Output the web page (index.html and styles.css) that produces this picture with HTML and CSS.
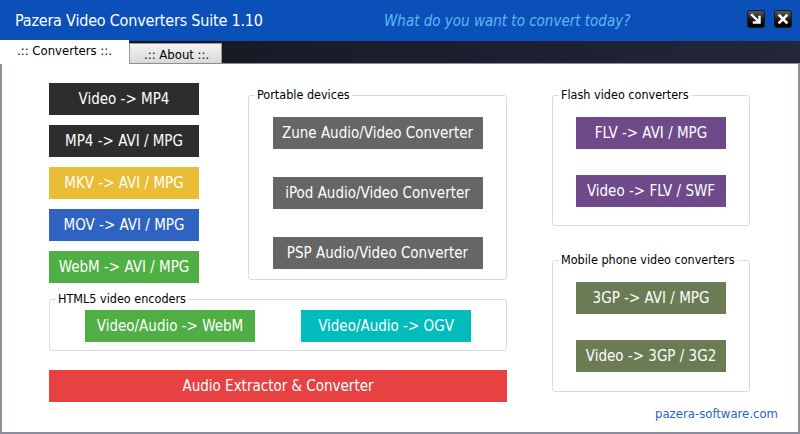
FILE: index.html
```html
<!DOCTYPE html>
<html lang="en">
<head>
  <meta charset="UTF-8">
  <title>Pazera Video Converters Suite 1.10</title>
  <link rel="stylesheet" href="styles.css">
</head>
<body>
  <div class="window">
    <header class="titlebar">
      <span class="title">Pazera Video Converters Suite 1.10</span>
      <span class="tagline">What do you want to convert today?</span>
      <div class="win-buttons">
        <span class="win-btn">
          <svg width="16" height="16" viewBox="0 0 16 16">
            <path d="M4 4 L11 11 M6 11.5 H11.5 V6" stroke="#fff" stroke-width="2.4" fill="none" stroke-linecap="square"/>
          </svg>
        </span>
        <span class="win-btn">
          <svg width="16" height="16" viewBox="0 0 16 16">
            <path d="M4.5 4.5 L11.5 11.5 M11.5 4.5 L4.5 11.5" stroke="#fff" stroke-width="2.6" fill="none" stroke-linecap="square"/>
          </svg>
        </span>
      </div>
    </header>

    <nav class="tabs">
      <span class="tab active">.:: Converters ::.</span>
      <span class="tab">.:: About ::.</span>
    </nav>

    <main class="page">
      <div class="left-col">
        <div class="top-row">
          <div class="stack">
            <a class="btn dark">Video -&gt; MP4</a>
            <a class="btn dark">MP4 -&gt; AVI / MPG</a>
            <a class="btn yellow">MKV -&gt; AVI / MPG</a>
            <a class="btn blue">MOV -&gt; AVI / MPG</a>
            <a class="btn green">WebM -&gt; AVI / MPG</a>
          </div>

          <fieldset class="group portable">
            <legend>Portable devices</legend>
            <div class="group-body">
              <a class="btn gray wide-btn">Zune Audio/Video Converter</a>
              <a class="btn gray wide-btn">iPod Audio/Video Converter</a>
              <a class="btn gray wide-btn">PSP Audio/Video Converter</a>
            </div>
          </fieldset>
        </div>

        <fieldset class="group html5">
          <legend>HTML5 video encoders</legend>
          <div class="group-body row">
            <a class="btn green mid-btn">Video/Audio -&gt; WebM</a>
            <a class="btn cyan mid-btn">Video/Audio -&gt; OGV</a>
          </div>
        </fieldset>

        <a class="btn red audio">Audio Extractor &amp; Converter</a>
      </div>

      <div class="right-col">
        <fieldset class="group flash">
          <legend>Flash video converters</legend>
          <div class="group-body">
            <a class="btn purple">FLV -&gt; AVI / MPG</a>
            <a class="btn purple">Video -&gt; FLV / SWF</a>
          </div>
        </fieldset>

        <fieldset class="group mobile">
          <legend>Mobile phone video converters</legend>
          <div class="group-body">
            <a class="btn olive">3GP -&gt; AVI / MPG</a>
            <a class="btn olive">Video -&gt; 3GP / 3G2</a>
          </div>
        </fieldset>

        <a class="site">pazera-software.com</a>
      </div>
    </main>
  </div>
</body>
</html>
```

FILE: styles.css
```css
body {
  margin: 0;
  font-family: 'DejaVu Sans Condensed', 'DejaVu Sans', sans-serif;
  font-stretch: condensed;
  background-color: #fff;
}
.window {
  width: 800px;
  height: 434px;
  overflow: hidden;
}
.titlebar {
  height: 41px;
  display: flex;
  align-items: center;
  background-color: #0b50b9;
}
.title {
  width: 384px;
  padding-left: 15px;
  box-sizing: border-box;
  color: #fff;
  font-size: 16px;
  letter-spacing: -0.2px;
}
.tagline {
  flex: 1;
  color: #5db8f2;
  font-style: italic;
  font-size: 15px;
}
.win-buttons {
  display: flex;
  gap: 11px;
  padding-right: 9px;
  margin-top: -4px;
}
.win-btn {
  width: 16px;
  height: 16px;
  border-radius: 2px;
  background: linear-gradient(#5a5a5a, #111 60%, #000);
  box-shadow: 0 0 0 1px #1a1a1a;
  display: flex;
}
.tabs {
  height: 23px;
  display: flex;
  align-items: flex-end;
  background: linear-gradient(to right, #14151d, #23263c);
  border-bottom: 1px solid #8a8e9a;
  box-sizing: border-box;
}
.tab {
  font-size: 13px;
  color: #000;
  box-sizing: border-box;
}
.tab.active {
  width: 129px;
  height: 24px;
  padding: 3px 0 0 17px;
  background-color: #fff;
  margin-bottom: -1px;
}
.tab:not(.active) {
  width: 93px;
  height: 20px;
  padding: 3px 0 0 14px;
  background: linear-gradient(#f4f4f4, #d9d9d9);
  border: 1px solid #9a9a9a;
  border-bottom: none;
}
.page {
  height: 370px;
  box-sizing: border-box;
  border: 2px solid #8a8e9a;
  border-top: none;
  padding: 19px 0 0 47px;
  display: flex;
  gap: 45px;
  align-items: flex-start;
}
.left-col {
  width: 458px;
  display: flex;
  flex-direction: column;
}
.top-row {
  display: flex;
  gap: 49px;
  align-items: flex-start;
}
.stack {
  display: flex;
  flex-direction: column;
  gap: 10px;
}
.btn {
  display: flex;
  align-items: center;
  justify-content: center;
  width: 150px;
  height: 32px;
  color: #fff;
  font-size: 15px;
  text-decoration: none;
}
.dark { background-color: #2d2d2d; }
.yellow { background-color: #e9bd35; }
.blue { background-color: #2f63c1; }
.green { background-color: #4fae44; }
.gray { background-color: #666666; }
.cyan { background-color: #00bcbc; }
.red { background-color: #e84142; }
.purple { background-color: #6e4a8b; }
.olive { background-color: #6b7b53; }

.group {
  margin: 0;
  padding: 0;
  border: 1px solid #d6dde5;
  border-radius: 3px;
  box-sizing: border-box;
}
.group legend {
  margin-left: 6px;
  padding: 0 2px;
  font-size: 12.5px;
  line-height: 16px;
  color: #000;
}
.group-body {
  display: flex;
  flex-direction: column;
  align-items: center;
}
.portable {
  width: 260px;
  margin-top: 4px;
}
.portable .group-body {
  padding: 14px 0 10px;
  gap: 28px;
}
.wide-btn {
  width: 210px;
}
.html5 {
  width: 458px;
  margin-top: 8px;
}
.html5 .group-body.row {
  flex-direction: row;
  justify-content: center;
  gap: 46px;
  padding: 3px 0 8px;
}
.mid-btn {
  width: 170px;
}
.audio {
  width: 458px;
  margin-top: 19px;
}
.right-col {
  width: 226px;
  display: flex;
  flex-direction: column;
}
.flash, .mobile {
  width: 198px;
}
.flash {
  margin-top: 4px;
}
.flash .group-body {
  padding: 14px 0 18px;
  gap: 26px;
}
.mobile {
  margin-top: 26px;
}
.mobile .group-body {
  padding: 14px 0 19px;
  gap: 26px;
}
.site {
  margin-top: 14px;
  align-self: flex-end;
  color: #2e62c4;
  font-size: 13px;
  line-height: 16px;
}
```
